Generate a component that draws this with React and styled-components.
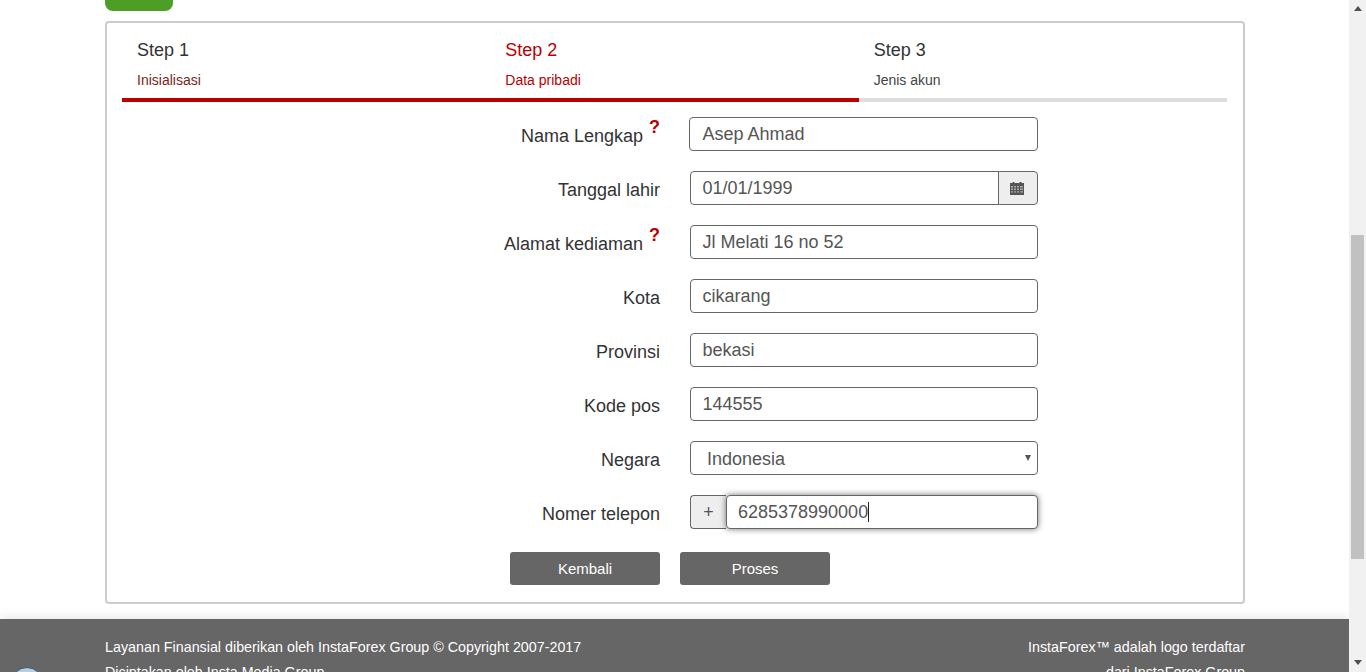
import React from "react";
import styled, { createGlobalStyle } from "styled-components";

const Global = createGlobalStyle`
  html, body { margin: 0; padding: 0; height: 100%; overflow: hidden; background: #fff; }
  body { font-family: "Liberation Sans", Arial, sans-serif; color: #333; }
  * { box-sizing: border-box; }
`;
const Viewport = styled.div`display: flex; height: 672px; overflow: hidden;`;
const Page = styled.div`flex: 1; min-width: 0; display: flex; flex-direction: column; height: 672px; overflow: hidden;`;
const Wrap = styled.div`width: 1140px; margin: 0 auto 0 105px;`;
const GreenTab = styled.div`width: 68px; height: 11px; background: #4c9e26; border-radius: 0 0 8px 8px;`;
const Card = styled.div`margin-top: 10px; height: 583px; border: 2px solid #ccc; border-radius: 4px; padding: 0 16px 0 15px;`;
const Steps = styled.div`display: grid; grid-template-columns: repeat(3, 1fr); height: 79px;`;
const Step = styled.div`
  padding: 16px 0 0 15px; border-bottom: 4px solid ${p => p.$bar ? "#b90000" : "#ddd"};
  color: ${p => p.$active ? "#b90000" : "#333"};
`;
const StepTitle = styled.div`font-size: 18px; line-height: 22px;`;
const StepSub = styled.div`font-size: 14px; line-height: 16px; margin-top: 11px; color: ${p => p.$active ? "#b90000" : p.$red ? "#7a1f18" : "#444"};`;
const Form = styled.div`display: flex; flex-direction: column; gap: 20px; margin-top: 15px;`;
const Row = styled.div`display: flex; height: 34px; align-items: stretch;`;
const Label = styled.div`width: 538px; padding-top: 7px; font-size: 18px; line-height: 24px; color: #333; text-align: right; display: flex; justify-content: flex-end;`;
const Req = styled.span`color: #b90000; font-weight: 700; font-size: 18px; line-height: 18px; margin-left: 6px; margin-top: -6px; width: 11px;`;
const Field = styled.div`margin-left: 30px; width: 348px; display: flex; position: relative;`;
const Input = styled.div`
  flex: 1; height: 34px; border: 1px solid #666; border-radius: ${p => p.$r || "4px"};
  padding: ${p => p.$select ? "2px" : "1px"} ${p => p.$wide ? "12.5px" : "11.5px"} 0; font-size: 18px; line-height: 30px; color: #555; background: #fff;
  margin-left: ${p => p.$wide ? "-1px" : 0};
  ${p => p.$focus && "box-shadow: 0 0 6px rgba(0,0,0,.55); position: relative; padding-left: 11px;"}
`;
const Addon = styled.div`
  height: 34px; background: #eee; border: 1px solid #666; display: flex; align-items: center; justify-content: center; color: #555;
  width: ${p => p.$w}px; font-size: 18px;
  border-radius: ${p => p.$left ? "4px 0 0 4px" : "0 4px 4px 0"};
  ${p => p.$left ? "border-right: 0;" : "border-left: 1px solid #666; margin-left: -1px; padding-right: 2px;"}
`;
const Caret = styled.span`display: inline-block; width: 1px; height: 20px; background: #222; vertical-align: -4px;`;
const Arrow = styled.span`position: absolute; right: 7px; top: 14px; width: 0; height: 0; border-left: 3px solid transparent; border-right: 3px solid transparent; border-top: 6px solid #555;`;
const Selected = styled.span`padding-left: 4.5px;`;
const Actions = styled.div`display: flex; gap: 20px; margin: 23px 0 0 388px;`;
const Btn = styled.div`width: 150px; height: 33px; background: #666; border-radius: 3px; color: #fff; font-size: 15px; line-height: 33px; text-align: center;`;
const Footer = styled.div`
  margin-top: 15px; flex: 1; background: #666; color: #fff; box-shadow: 0 -2px 10px rgba(0,0,0,.1);
  font-size: 14.3px; line-height: 25px; position: relative; overflow: hidden;
`;
const FootInner = styled.div`width: 1140px; margin-left: 105px; padding-top: 16px; display: flex; justify-content: space-between;`;
const Right = styled.div`text-align: right;`;
const Logo = styled.div`position: absolute; left: 11px; top: 48px; width: 32px; height: 32px; border-radius: 50%; background: #bccdd8; border: 1px solid #1f5f8f;`;
const Bar = styled.div`width: 17px; height: 672px; background: #f1f1f1; position: relative; flex: none;`;
const Thumb = styled.div`position: absolute; left: 2px; top: 235px; width: 13px; height: 324px; background: #c1c1c1;`;
const Up = styled.div`position: absolute; left: 5px; top: 6px; border-left: 4px solid transparent; border-right: 4px solid transparent; border-bottom: 5px solid #505050;`;
const Down = styled.div`position: absolute; left: 5px; top: 660px; border-left: 4px solid transparent; border-right: 4px solid transparent; border-top: 5px solid #505050;`;

const Cal = () => (
  <svg width="14" height="14" viewBox="0 0 14 14" fill="#555">
    <path d="M0 2h2.5V1h2v1h5V1h2v1H14v12H0z" />
    <path fill="#aaa" d="M1 5h2v1.4H1zM4 5h2v1.4H4zM7 5h2v1.4H7zM10 5h3v1.4h-3zM1 7.6h2v1.4H1zM4 7.6h2v1.4H4zM7 7.6h2v1.4H7zM10 7.6h3v1.4h-3zM1 10.2h2v1.4H1zM4 10.2h2v1.4H4zM7 10.2h2v1.4H7zM10 10.2h3v1.4h-3z" />
  </svg>
);

const Plain = ({ label, req, value, wide }) => (
  <Row>
    <Label>{label}{req && <Req>?</Req>}</Label>
    <Field><Input $wide={wide}>{value}</Input></Field>
  </Row>
);

export default function App() {
  return (
    <Viewport>
      <Global />
      <Page>
        <Wrap>
          <GreenTab />
          <Card>
            <Steps>
              <Step $bar><StepTitle>Step 1</StepTitle><StepSub $red>Inisialisasi</StepSub></Step>
              <Step $bar $active><StepTitle>Step 2</StepTitle><StepSub $active>Data pribadi</StepSub></Step>
              <Step><StepTitle>Step 3</StepTitle><StepSub>Jenis akun</StepSub></Step>
            </Steps>
            <Form>
              <Plain label="Nama Lengkap" req value="Asep Ahmad" wide />
              <Row>
                <Label>Tanggal lahir</Label>
                <Field><Input $r="4px 0 0 4px">01/01/1999</Input><Addon $w={40}><Cal /></Addon></Field>
              </Row>
              <Plain label="Alamat kediaman" req value="Jl Melati 16 no 52" />
              <Plain label="Kota" value="cikarang" />
              <Plain label="Provinsi" value="bekasi" />
              <Plain label="Kode pos" value="144555" />
              <Row>
                <Label>Negara</Label>
                <Field><Input $select><Selected>Indonesia</Selected></Input><Arrow /></Field>
              </Row>
              <Row>
                <Label>Nomer telepon</Label>
                <Field>
                  <Addon $left $w={36}>+</Addon>
                  <Input $focus>6285378990000<Caret /></Input>
                </Field>
              </Row>
            </Form>
            <Actions><Btn>Kembali</Btn><Btn>Proses</Btn></Actions>
          </Card>
        </Wrap>
        <Footer>
          <Logo />
          <FootInner>
            <div>Layanan Finansial diberikan oleh InstaForex Group © Copyright 2007-2017<br />Diciptakan oleh Insta Media Group</div>
            <Right>InstaForex™ adalah logo terdaftar<br />dari InstaForex Group</Right>
          </FootInner>
        </Footer>
      </Page>
      <Bar><Up /><Thumb /><Down /></Bar>
    </Viewport>
  );
}
